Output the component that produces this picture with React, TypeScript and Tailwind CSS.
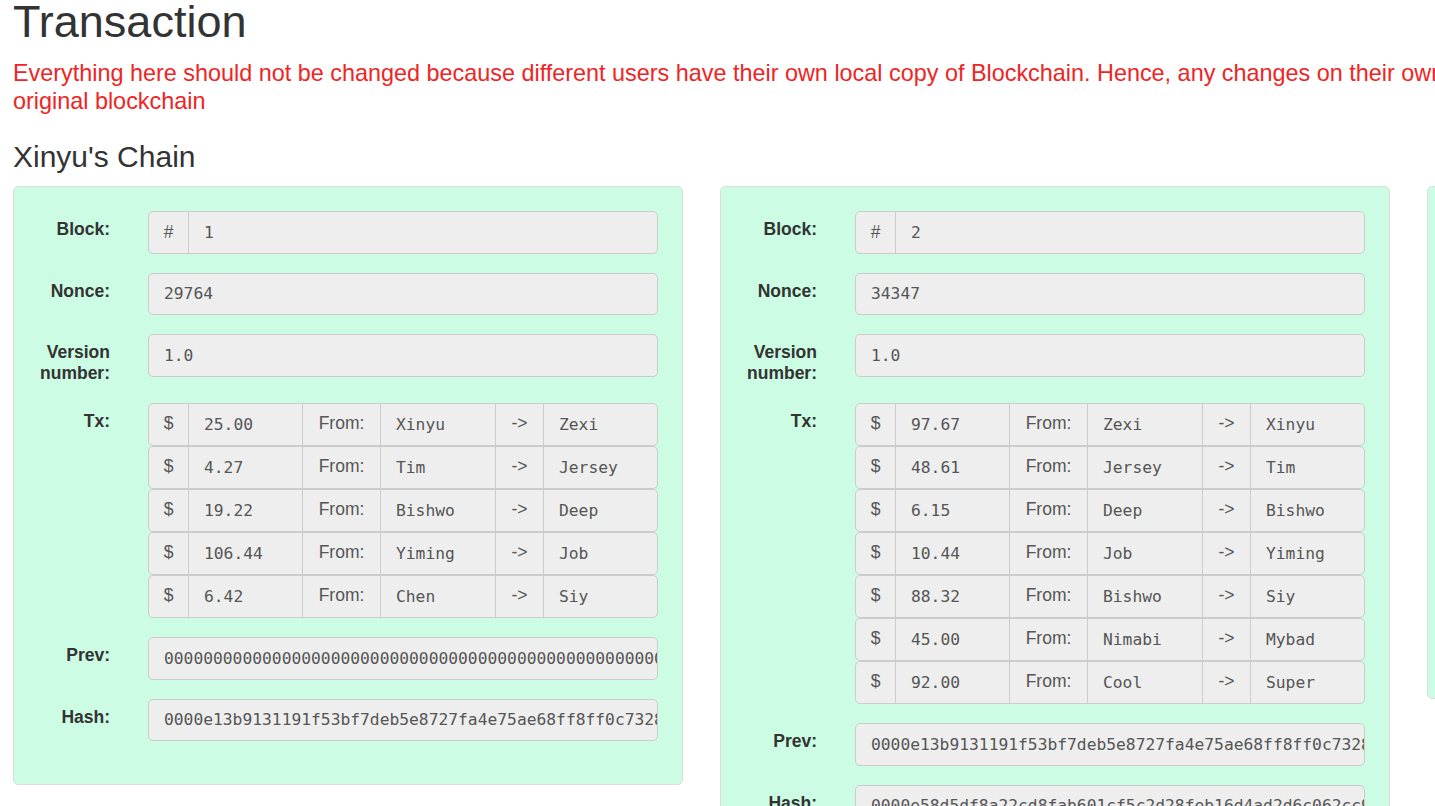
type Tx = { amount: string; from: string; to: string };

type Block = {
  number: number;
  nonce: string;
  version: string;
  txs: Tx[];
  prev: string;
  hash: string;
};

const BLOCKS: Block[] = [
  {
    number: 1,
    nonce: "29764",
    version: "1.0",
    txs: [
      { amount: "25.00", from: "Xinyu", to: "Zexi" },
      { amount: "4.27", from: "Tim", to: "Jersey" },
      { amount: "19.22", from: "Bishwo", to: "Deep" },
      { amount: "106.44", from: "Yiming", to: "Job" },
      { amount: "6.42", from: "Chen", to: "Siy" },
    ],
    prev: "0000000000000000000000000000000000000000000000000000000000000000",
    hash: "0000e13b9131191f53bf7deb5e8727fa4e75ae68ff8ff0c73287a1d4c0b2e9f1",
  },
  {
    number: 2,
    nonce: "34347",
    version: "1.0",
    txs: [
      { amount: "97.67", from: "Zexi", to: "Xinyu" },
      { amount: "48.61", from: "Jersey", to: "Tim" },
      { amount: "6.15", from: "Deep", to: "Bishwo" },
      { amount: "10.44", from: "Job", to: "Yiming" },
      { amount: "88.32", from: "Bishwo", to: "Siy" },
      { amount: "45.00", from: "Nimabi", to: "Mybad" },
      { amount: "92.00", from: "Cool", to: "Super" },
    ],
    prev: "0000e13b9131191f53bf7deb5e8727fa4e75ae68ff8ff0c73287a1d4c0b2e9f1",
    hash: "0000e58d5df8a22cd8fab601cf5c2d28feb16d4ad2d6c062cc91b7e03fa4d8e2",
  },
  {
    number: 3,
    nonce: "11482",
    version: "1.0",
    txs: [
      { amount: "12.00", from: "Tim", to: "Chen" },
      { amount: "3.50", from: "Siy", to: "Deep" },
      { amount: "7.25", from: "Job", to: "Zexi" },
    ],
    prev: "0000e58d5df8a22cd8fab601cf5c2d28feb16d4ad2d6c062cc91b7e03fa4d8e2",
    hash: "0000a71c3e09b2d4f85e61c7a9b0d3e24f6c8a1b9d7e5f3c2a0b4d6e8f1a3c5b",
  },
];

const mono = "font-['DejaVu_Sans_Mono','Liberation_Mono',monospace] text-[16.3px] text-[#555]";

function Label({ children }: { children: React.ReactNode }) {
  return (
    <div className="ml-[9px] w-[87px] shrink-0 pt-[8px] text-right text-[17.5px] font-bold leading-[21px] text-[#333]">
      {children}
    </div>
  );
}

function Field({ value }: { value: string }) {
  return (
    <div
      className={`flex h-[42.5px] w-[510px] items-center overflow-hidden whitespace-nowrap rounded-[5px] border border-[#ccc] bg-[#eee] px-[15px] pt-[1px] ${mono}`}
    >
      {value}
    </div>
  );
}

function Row({ label, children }: { label: React.ReactNode; children: React.ReactNode }) {
  return (
    <div className="mb-[19px] flex items-start gap-[38px]">
      <Label>{label}</Label>
      {children}
    </div>
  );
}

function TxRow({ tx }: { tx: Tx }) {
  const addon = "flex items-center justify-center pb-[2px] text-[17.5px] text-[#555]";
  const cell = `flex items-center overflow-hidden whitespace-nowrap px-[15px] pt-[2px] ${mono}`;
  return (
    <div className="flex h-[43px] w-[510px] overflow-hidden rounded-[5px] border border-[#ccc] bg-[#eee]">
      <div className={`${addon} w-[40px] border-r border-[#ccc]`}>$</div>
      <div className={`${cell} w-[113px]`}>{tx.amount}</div>
      <div className={`${addon} w-[79px] border-x border-[#ccc]`}>From:</div>
      <div className={`${cell} w-[114px]`}>{tx.from}</div>
      <div className={`${addon} w-[49px] border-x border-[#ccc]`}>-&gt;</div>
      <div className={`${cell} flex-1`}>{tx.to}</div>
    </div>
  );
}

function BlockCard({ block }: { block: Block }) {
  return (
    <div className="w-[670px] shrink-0 rounded-[5px] border border-[#ddd] bg-[#ccfce4] py-[24px]">
      <Row label="Block:">
        <div className="flex h-[42.5px] w-[510px] overflow-hidden rounded-[5px] border border-[#ccc] bg-[#eee]">
          <div className="flex w-[40px] items-center justify-center border-r border-[#ccc] text-[17.5px] text-[#555]">
            #
          </div>
          <div className={`flex flex-1 items-center px-[15px] pt-[1px] ${mono}`}>{block.number}</div>
        </div>
      </Row>
      <Row label="Nonce:">
        <Field value={block.nonce} />
      </Row>
      <Row
        label={
          <>
            Version
            <br />
            number:
          </>
        }
      >
        <div className="pb-[7.5px]">
          <Field value={block.version} />
        </div>
      </Row>
      <Row label="Tx:">
        <div className="flex flex-col">
          {block.txs.map((tx, i) => (
            <TxRow key={i} tx={tx} />
          ))}
        </div>
      </Row>
      <Row label="Prev:">
        <Field value={block.prev} />
      </Row>
      <Row label="Hash:">
        <Field value={block.hash} />
      </Row>
    </div>
  );
}

export default function App() {
  return (
    <div className="h-screen w-full overflow-hidden bg-white font-['Liberation_Sans',Arial,sans-serif] text-[#333]">
      <div className="pl-[13px]">
        <h1 className="text-[45px] font-normal leading-[43px]">Transaction</h1>
        <p className="mt-[16px] w-[1800px] text-[23.4px] leading-[28px] text-[#f02424]">
          Everything here should not be changed because different users have their own local copy of Blockchain.
          Hence, any changes on their own local copy will not affect the original blockchain
        </p>
        <h3 className="mt-[25px] text-[30px] font-normal leading-[33px]">Xinyu's Chain</h3>
        <div className="mt-[13px] flex items-start gap-[37px]">
          {BLOCKS.map((b) => (
            <BlockCard key={b.number} block={b} />
          ))}
        </div>
      </div>
    </div>
  );
}
